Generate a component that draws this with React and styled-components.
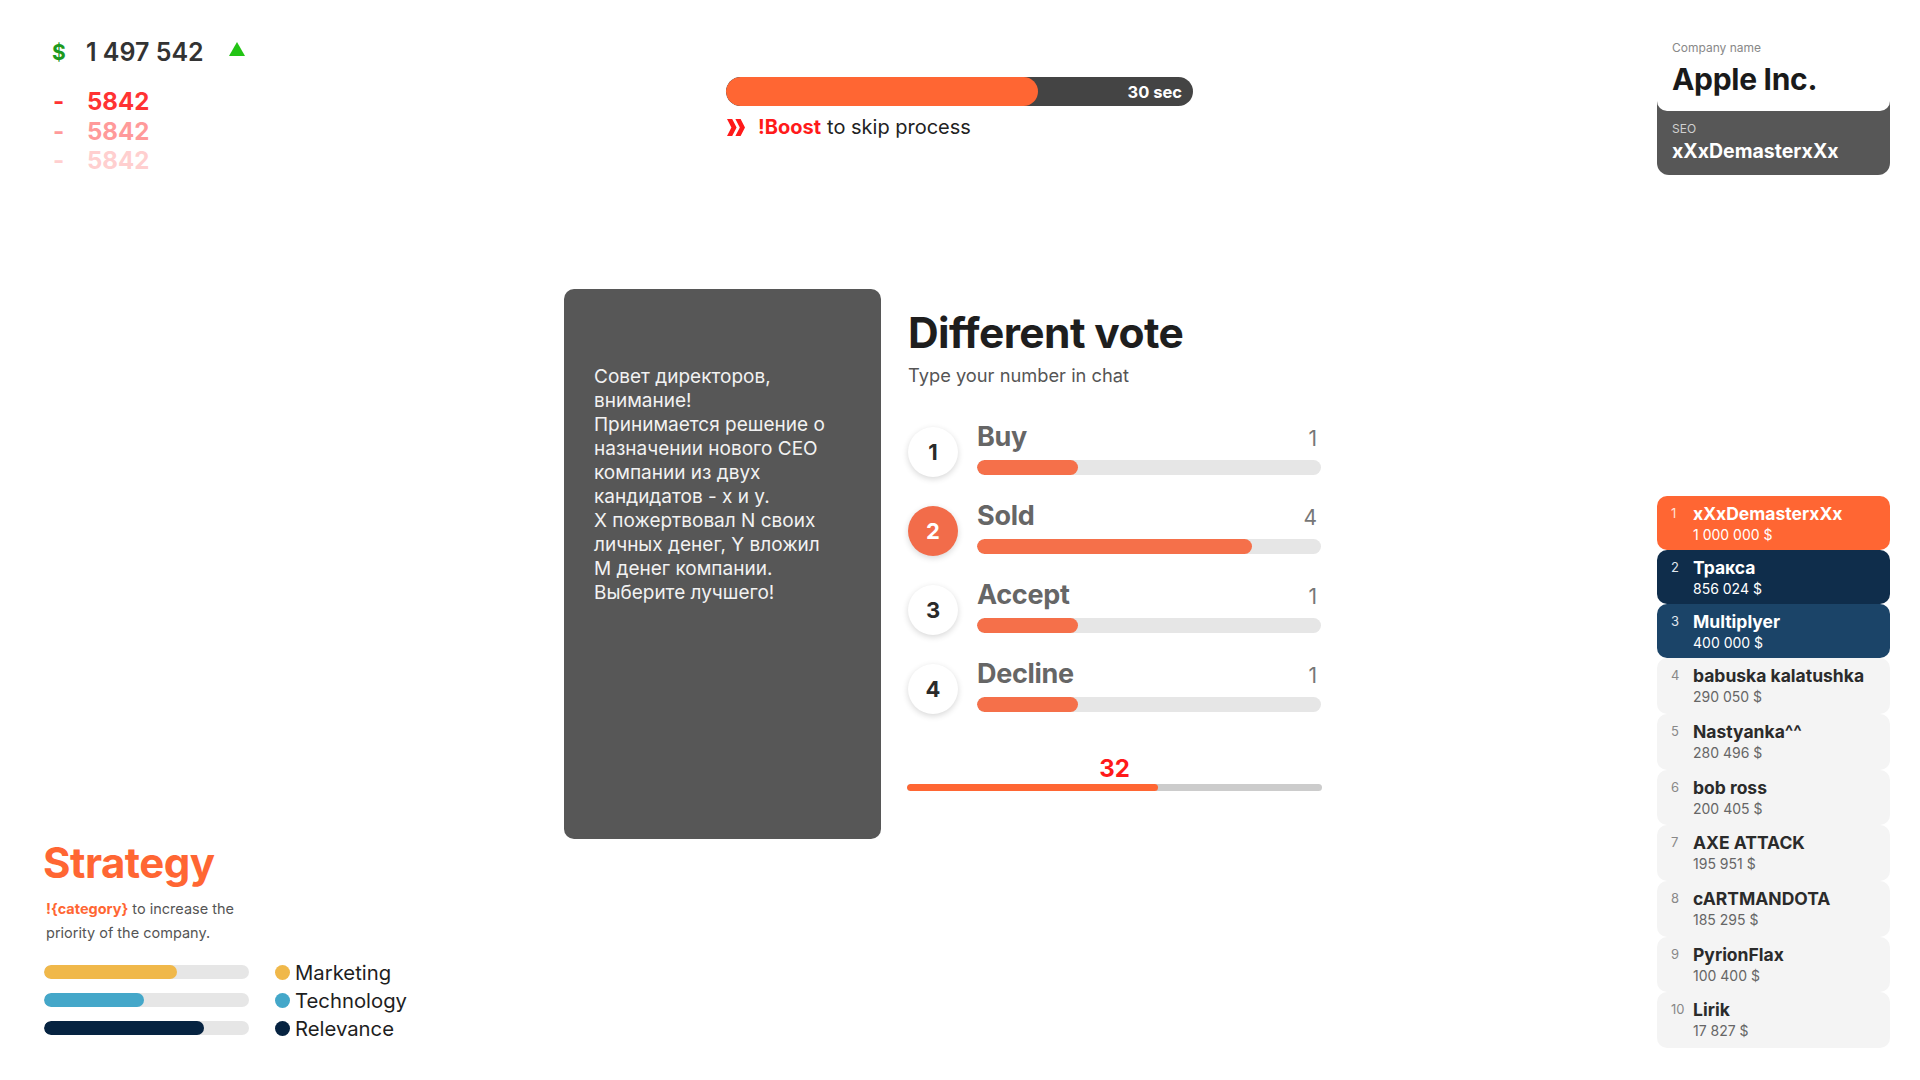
import React from 'react'
import styled, { createGlobalStyle } from 'styled-components'

const Global = createGlobalStyle`
  html, body {
    margin: 0;
    padding: 0;
    background: #fff;
  }
  body {
    font-family: Inter, "Noto Sans", "Liberation Sans", sans-serif;
  }
`

const Page = styled.div`
  width: 1920px;
  height: 1080px;
  display: grid;
  grid-template-columns: 564px 758px 1fr;
  overflow: hidden;
`

const LeftCol = styled.div`
  display: flex;
  flex-direction: column;
  justify-content: space-between;
  padding: 36px 0 38px 43px;
`

const Balance = styled.div`
  display: flex;
  align-items: center;
  height: 32px;
  margin-left: 9px;
`

const Dollar = styled.span`
  width: 34px;
  color: #1e9a1e;
  font-size: 21px;
  font-weight: 700;
`

const BalanceValue = styled.span`
  font-size: 25px;
  font-weight: 600;
  color: #333;
`

const UpArrow = styled.span`
  margin-left: 25px;
  width: 0;
  height: 0;
  border-left: 8px solid transparent;
  border-right: 8px solid transparent;
  border-bottom: 14px solid #22c414;
  margin-top: -6px;
`

const Losses = styled.div`
  margin-top: 19px;
  margin-left: 10px;
`

const Loss = styled.div`
  display: flex;
  height: 29.5px;
  align-items: center;
  font-size: 24px;
  font-weight: 700;
  color: ${p => p.$color};
`

const Dash = styled.span`
  width: 34px;
`

const Strategy = styled.div`
  display: flex;
  flex-direction: column;
`

const StrategyTitle = styled.h2`
  margin: 0;
  font-size: 42px;
  line-height: 48px;
  font-weight: 700;
  color: #ff6633;
  letter-spacing: -0.5px;
`

const StrategyText = styled.p`
  margin: 10px 0 0 3px;
  font-size: 14.5px;
  line-height: 24px;
  color: #555;
  b {
    color: #ff6633;
    font-weight: 700;
  }
`

const Metrics = styled.div`
  margin-top: 13px;
  margin-left: 1px;
  display: flex;
  flex-direction: column;
`

const Metric = styled.div`
  display: flex;
  align-items: center;
  height: 28px;
`

const Track = styled.div`
  width: 205px;
  height: 14px;
  border-radius: 7px;
  background: #e6e6e6;
  overflow: hidden;
`

const Fill = styled.div`
  height: 100%;
  border-radius: 7px;
  background: ${p => p.$color};
`

const Dot = styled.span`
  width: 15px;
  height: 15px;
  border-radius: 50%;
  margin-left: 26px;
  margin-right: 5px;
  background: ${p => p.$color};
`

const MetricName = styled.span`
  font-size: 20.3px;
  color: #1e1e1e;
`

const CenterCol = styled.div`
  padding-top: 77px;
  display: flex;
  flex-direction: column;
`

const Timer = styled.div`
  margin-left: 162px;
  width: 467px;
`

const TimerBar = styled.div`
  position: relative;
  height: 29px;
  border-radius: 15px;
  background: #444;
  display: flex;
  align-items: center;
  justify-content: flex-end;
  overflow: hidden;
`

const TimerFill = styled.div`
  position: absolute;
  left: 0;
  top: 0;
  bottom: 0;
  border-radius: 15px;
  background: #ff6633;
`

const TimerLabel = styled.span`
  position: relative;
  padding-right: 11px;
  color: #fff;
  font-size: 16.5px;
  font-weight: 700;
`

const BoostLine = styled.div`
  margin-top: 8px;
  display: flex;
  align-items: center;
  font-size: 20px;
  line-height: 26px;
  color: #222;
  padding-left: 1px;
  b {
    color: #ff1a1a;
    font-weight: 700;
    margin: 0 6px 0 13px;
  }
`

const Main = styled.div`
  margin-top: 149px;
  display: flex;
  gap: 26px;
`

const Notice = styled.div`
  width: 318px;
  height: 550px;
  box-sizing: border-box;
  background: #575757;
  border-radius: 10px;
  padding: 76px 16px 0 30px;
  color: #f2f2f2;
  font-size: 19px;
  line-height: 24px;
`

const Vote = styled.div`
  width: 415px;
  display: flex;
  flex-direction: column;
`

const VoteTitle = styled.h1`
  margin: 20px 0 0 1px;
  font-size: 42.5px;
  line-height: 48px;
  font-weight: 700;
  color: #1e1e1e;
  letter-spacing: -0.6px;
`

const VoteHint = styled.div`
  margin: 6px 0 0 1px;
  font-size: 18.3px;
  line-height: 24px;
  color: #555;
`

const Options = styled.div`
  margin-top: 34px;
  display: flex;
  flex-direction: column;
  gap: 23px;
`

const Option = styled.div`
  display: flex;
  align-items: flex-start;
  padding-left: 1px;
`

const Badge = styled.div`
  width: 50px;
  height: 50px;
  margin-top: 6px;
  border-radius: 50%;
  flex-shrink: 0;
  display: flex;
  align-items: center;
  justify-content: center;
  font-size: 22px;
  font-weight: 700;
  background: ${p => (p.$active ? '#f26c4a' : '#fff')};
  color: ${p => (p.$active ? '#fff' : '#2a2a2a')};
  box-shadow: 0 2px 6px rgba(0, 0, 0, 0.16);
`

const OptionBody = styled.div`
  margin-left: 19px;
  width: 344px;
`

const OptionHead = styled.div`
  display: flex;
  justify-content: space-between;
  align-items: baseline;
  height: 32px;
  line-height: 32px;
  padding-right: 4px;
`

const OptionName = styled.span`
  font-size: 27px;
  font-weight: 700;
  color: #666;
  letter-spacing: -0.3px;
`

const OptionCount = styled.span`
  font-size: 21px;
  color: #777;
`

const OptionTrack = styled.div`
  margin-top: 7px;
  height: 15px;
  border-radius: 8px;
  background: #e6e6e6;
  overflow: hidden;
`

const OptionFill = styled.div`
  height: 100%;
  border-radius: 8px;
  background: #f5704a;
`

const Total = styled.div`
  margin-top: 41px;
  display: flex;
  flex-direction: column;
  align-items: center;
`

const TotalValue = styled.div`
  font-size: 24px;
  line-height: 28px;
  font-weight: 700;
  color: #ff1a1a;
`

const TotalTrack = styled.div`
  margin-top: 1px;
  width: 415px;
  height: 7px;
  border-radius: 4px;
  background: #cccccc;
  overflow: hidden;
`

const TotalFill = styled.div`
  height: 100%;
  border-radius: 4px;
  background: #ff6633;
`

const RightCol = styled.div`
  display: flex;
  flex-direction: column;
  justify-content: space-between;
  align-items: flex-end;
  padding: 30px 30px 32px 0;
`

const Company = styled.div`
  width: 233px;
  border-radius: 0 0 12px 12px;
  background: linear-gradient(#fff 0 60px, #575757 60px);
`

const CompanyHead = styled.div`
  background: #fff;
  border-radius: 0 0 10px 10px;
  padding: 10px 15px 14px;
`

const SmallLabel = styled.div`
  font-size: 12px;
  line-height: 16px;
  color: ${p => p.$color};
`

const CompanyName = styled.div`
  margin-top: 5px;
  font-size: 30px;
  line-height: 36px;
  font-weight: 700;
  color: #1a1a1a;
  letter-spacing: -0.3px;
`

const CompanyCeo = styled.div`
  padding: 10px 15px 12px;
`

const CeoName = styled.div`
  margin-top: 2px;
  font-size: 19.5px;
  line-height: 24px;
  font-weight: 700;
  color: #fff;
`

const Board = styled.div`
  width: 233px;
  display: flex;
  flex-direction: column;
`

const Player = styled.div`
  height: ${p => (p.$top ? '54px' : '55.7px')};
  box-sizing: border-box;
  border-radius: 10px;
  display: flex;
  padding: 7px 0 0 14px;
  background: ${p => p.$bg};
`

const Rank = styled.span`
  width: 22px;
  font-size: 13px;
  line-height: 20px;
  color: ${p => p.$color};
`

const PlayerInfo = styled.div`
  display: flex;
  flex-direction: column;
`

const PlayerName = styled.span`
  font-size: 17.5px;
  line-height: 21px;
  font-weight: 700;
  color: ${p => p.$color};
`

const PlayerMoney = styled.span`
  margin-top: 2px;
  font-size: 14px;
  line-height: 18px;
  color: ${p => p.$color};
`

const losses = ['#ff3333', '#ff9a9a', '#ffcfcf']

const metrics = [
  { name: 'Marketing', color: '#f0b84a', value: 65 },
  { name: 'Technology', color: '#44a7c9', value: 49 },
  { name: 'Relevance', color: '#062341', value: 78 },
]

const options = [
  { name: 'Buy', count: 1, value: 29.5 },
  { name: 'Sold', count: 4, value: 80, active: true },
  { name: 'Accept', count: 1, value: 29.5 },
  { name: 'Decline', count: 1, value: 29.5 },
]

const players = [
  ['xXxDemasterxXx', '1 000 000 $'],
  ['Тракса', '856 024 $'],
  ['Multiplyer', '400 000 $'],
  ['babuska kalatushka', '290 050 $'],
  ['Nastyanka^^', '280 496 $'],
  ['bob ross', '200 405 $'],
  ['AXE ATTACK', '195 951 $'],
  ['cARTMANDOTA', '185 295 $'],
  ['PyrionFlax', '100 400 $'],
  ['Lirik', '17 827 $'],
]

const themes = [
  { bg: '#ff6633', rank: '#ffe1d6', name: '#fff', money: '#fff' },
  { bg: '#0f2d4b', rank: '#e0e6ee', name: '#fff', money: '#fff' },
  { bg: '#1b4468', rank: '#e0e6ee', name: '#fff', money: '#fff' },
]
const plain = { bg: '#f4f4f4', rank: '#888', name: '#2b2b2b', money: '#666' }

const noticeLines = [
  'Совет директоров,',
  'внимание!',
  'Принимается решение о',
  'назначении нового CEO',
  'компании из двух',
  'кандидатов - x и y.',
  'X пожертвовал N своих',
  'личных денег, Y вложил',
  'M денег компании.',
  'Выберите лучшего!',
]

function Chevrons() {
  return (
    <svg width="18" height="17" viewBox="0 0 18 17">
      <polygon points="0,0 5.2,0 9.6,8.5 5.2,17 0,17 4.4,8.5" fill="#ff1a1a" />
      <polygon points="8.4,0 13.6,0 18,8.5 13.6,17 8.4,17 12.8,8.5" fill="#ff1a1a" />
    </svg>
  )
}

export default function App() {
  return (
    <>
      <Global />
      <Page>
        <LeftCol>
          <div>
            <Balance>
              <Dollar>$</Dollar>
              <BalanceValue>1 497 542</BalanceValue>
              <UpArrow />
            </Balance>
            <Losses>
              {losses.map(c => (
                <Loss key={c} $color={c}>
                  <Dash>-</Dash>
                  5842
                </Loss>
              ))}
            </Losses>
          </div>

          <Strategy>
            <StrategyTitle>Strategy</StrategyTitle>
            <StrategyText>
              <b>!{'{category}'}</b> to increase the
              <br />
              priority of the company.
            </StrategyText>
            <Metrics>
              {metrics.map(m => (
                <Metric key={m.name}>
                  <Track>
                    <Fill $color={m.color} style={{ width: `${m.value}%` }} />
                  </Track>
                  <Dot $color={m.color} />
                  <MetricName>{m.name}</MetricName>
                </Metric>
              ))}
            </Metrics>
          </Strategy>
        </LeftCol>

        <CenterCol>
          <Timer>
            <TimerBar>
              <TimerFill style={{ width: '66.8%' }} />
              <TimerLabel>30 sec</TimerLabel>
            </TimerBar>
            <BoostLine>
              <Chevrons />
              <b>!Boost</b>to skip process
            </BoostLine>
          </Timer>

          <Main>
            <Notice>
              {noticeLines.map(l => (
                <div key={l}>{l}</div>
              ))}
            </Notice>

            <Vote>
              <VoteTitle>Different vote</VoteTitle>
              <VoteHint>Type your number in chat</VoteHint>
              <Options>
                {options.map((o, i) => (
                  <Option key={o.name}>
                    <Badge $active={o.active}>{i + 1}</Badge>
                    <OptionBody>
                      <OptionHead>
                        <OptionName>{o.name}</OptionName>
                        <OptionCount>{o.count}</OptionCount>
                      </OptionHead>
                      <OptionTrack>
                        <OptionFill style={{ width: `${o.value}%` }} />
                      </OptionTrack>
                    </OptionBody>
                  </Option>
                ))}
              </Options>
              <Total>
                <TotalValue>32</TotalValue>
                <TotalTrack>
                  <TotalFill style={{ width: '60.5%' }} />
                </TotalTrack>
              </Total>
            </Vote>
          </Main>
        </CenterCol>

        <RightCol>
          <Company>
            <CompanyHead>
              <SmallLabel $color="#888">Company name</SmallLabel>
              <CompanyName>Apple Inc.</CompanyName>
            </CompanyHead>
            <CompanyCeo>
              <SmallLabel $color="#d0d0d0">SEO</SmallLabel>
              <CeoName>xXxDemasterxXx</CeoName>
            </CompanyCeo>
          </Company>

          <Board>
            {players.map(([name, money], i) => {
              const t = themes[i] || plain
              return (
                <Player key={name} $bg={t.bg} $top={i < 3}>
                  <Rank $color={t.rank}>{i + 1}</Rank>
                  <PlayerInfo>
                    <PlayerName $color={t.name}>{name}</PlayerName>
                    <PlayerMoney $color={t.money}>{money}</PlayerMoney>
                  </PlayerInfo>
                </Player>
              )
            })}
          </Board>
        </RightCol>
      </Page>
    </>
  )
}
